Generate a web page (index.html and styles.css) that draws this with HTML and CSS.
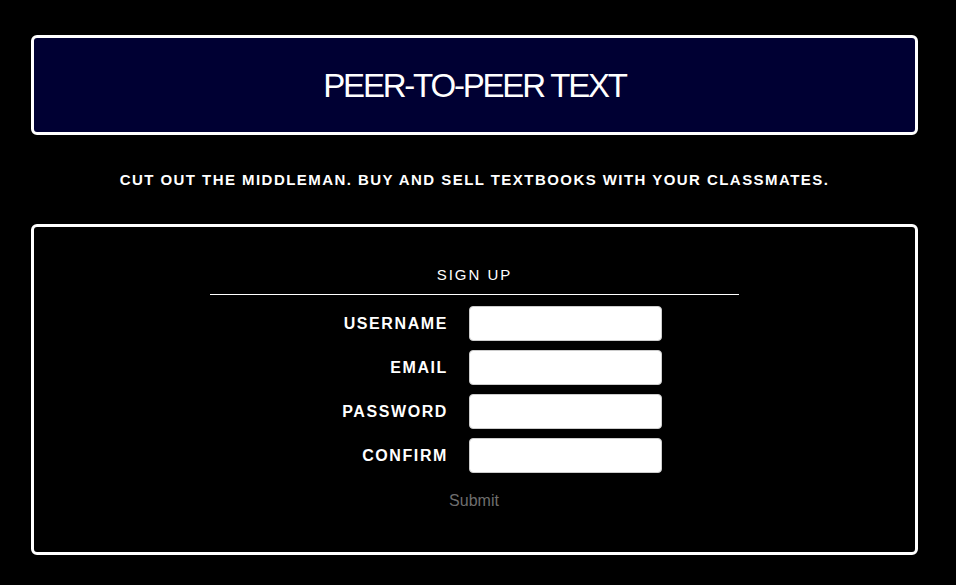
FILE: index.html
```html
<!DOCTYPE html>
<html>
<head>
<meta charset="utf-8">
<title>Peer-to-Peer Text</title>
<link rel="stylesheet" href="styles.css">
</head>
<body>
<div class="page">
  <header class="banner">
    <h1 class="title">PEER-TO-PEER TEXT</h1>
  </header>
  <p class="tagline">CUT OUT THE MIDDLEMAN. BUY AND SELL TEXTBOOKS WITH YOUR CLASSMATES.</p>
  <section class="panel">
    <form class="signup">
      <h2 class="signup-title">SIGN UP</h2>
      <div class="fields">
        <label class="field-label" for="username">USERNAME</label>
        <input class="field-input" id="username" type="text">
        <label class="field-label" for="email">EMAIL</label>
        <input class="field-input" id="email" type="text">
        <label class="field-label" for="password">PASSWORD</label>
        <input class="field-input" id="password" type="password">
        <label class="field-label" for="confirm">CONFIRM</label>
        <input class="field-input" id="confirm" type="password">
      </div>
      <div class="actions">
        <button class="submit" type="button">Submit</button>
      </div>
    </form>
  </section>
</div>
</body>
</html>
```
FILE: styles.css
```css
html, body {
  margin: 0;
  padding: 0;
  background: #000;
}
body {
  font-family: "Liberation Sans", Arial, sans-serif;
  color: #fff;
}
.page {
  padding: 35px 38px 0 31px;
}
.banner {
  height: 94px;
  border: 3px solid #fff;
  border-radius: 6px;
  background: #000033;
  display: flex;
  align-items: center;
  justify-content: center;
}
.title {
  margin: 0;
  padding-top: 1px;
  font-size: 33px;
  font-weight: normal;
  letter-spacing: -2.2px;
  line-height: 1;
}
.tagline {
  margin: 0;
  height: 89px;
  display: flex;
  align-items: center;
  justify-content: center;
  font-size: 15px;
  font-weight: bold;
  letter-spacing: 1.45px;
}
.panel {
  height: 325px;
  border: 3px solid #fff;
  border-radius: 6px;
}
.signup {
  width: 529px;
  margin: 0 auto;
  padding-top: 39px;
}
.signup-title {
  margin: 0;
  padding-bottom: 11px;
  border-bottom: 1px solid #fff;
  text-align: center;
  font-size: 15px;
  font-weight: normal;
  letter-spacing: 2px;
  line-height: 17px;
}
.fields {
  display: grid;
  grid-template-columns: 238px 193px;
  column-gap: 21px;
  row-gap: 9px;
  align-items: center;
  padding-top: 11px;
}
.field-label {
  text-align: right;
  font-size: 16px;
  font-weight: bold;
  letter-spacing: 1.6px;
}
.field-input {
  box-sizing: border-box;
  width: 193px;
  height: 35px;
  margin: 0;
  border: 1px solid #ccc;
  border-radius: 4px;
  background: #fff;
}
.actions {
  display: flex;
  justify-content: center;
  padding-top: 19px;
}
.submit {
  background: none;
  border: none;
  padding: 0;
  margin-left: -1px;
  font-family: "Liberation Sans", Arial, sans-serif;
  font-size: 16px;
  color: #6e6e6e;
}
```
